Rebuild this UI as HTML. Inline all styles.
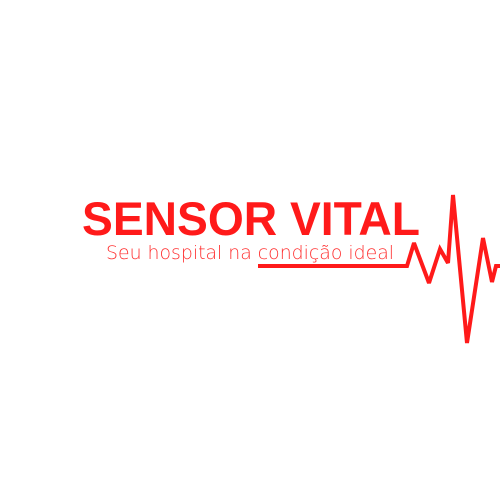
<!DOCTYPE html>
<html><head><style>
html,body{margin:0;padding:0;background:#fff;width:500px;height:500px;overflow:hidden}
</style></head><body>
<svg width="500" height="500" viewBox="0 0 500 500" xmlns="http://www.w3.org/2000/svg">
<text x="82" y="235" font-family="Liberation Sans, sans-serif" font-weight="bold" font-size="47" fill="#ff1a1a" textLength="338" lengthAdjust="spacingAndGlyphs">SENSOR VITAL</text>
<text x="106" y="259" font-family="DejaVu Sans, sans-serif" font-weight="200" font-size="19" fill="#ff3030" textLength="288" lengthAdjust="spacingAndGlyphs">Seu hospital na condição ideal</text>
<polyline points="258,266 407,266 414,243 429,283 440,249 448,263 453,195 467,343 483,238 492,282 496,266 500,266" fill="none" stroke="#ff1a1a" stroke-width="4" stroke-linejoin="miter" stroke-miterlimit="3"/>
</svg>
</body></html>
